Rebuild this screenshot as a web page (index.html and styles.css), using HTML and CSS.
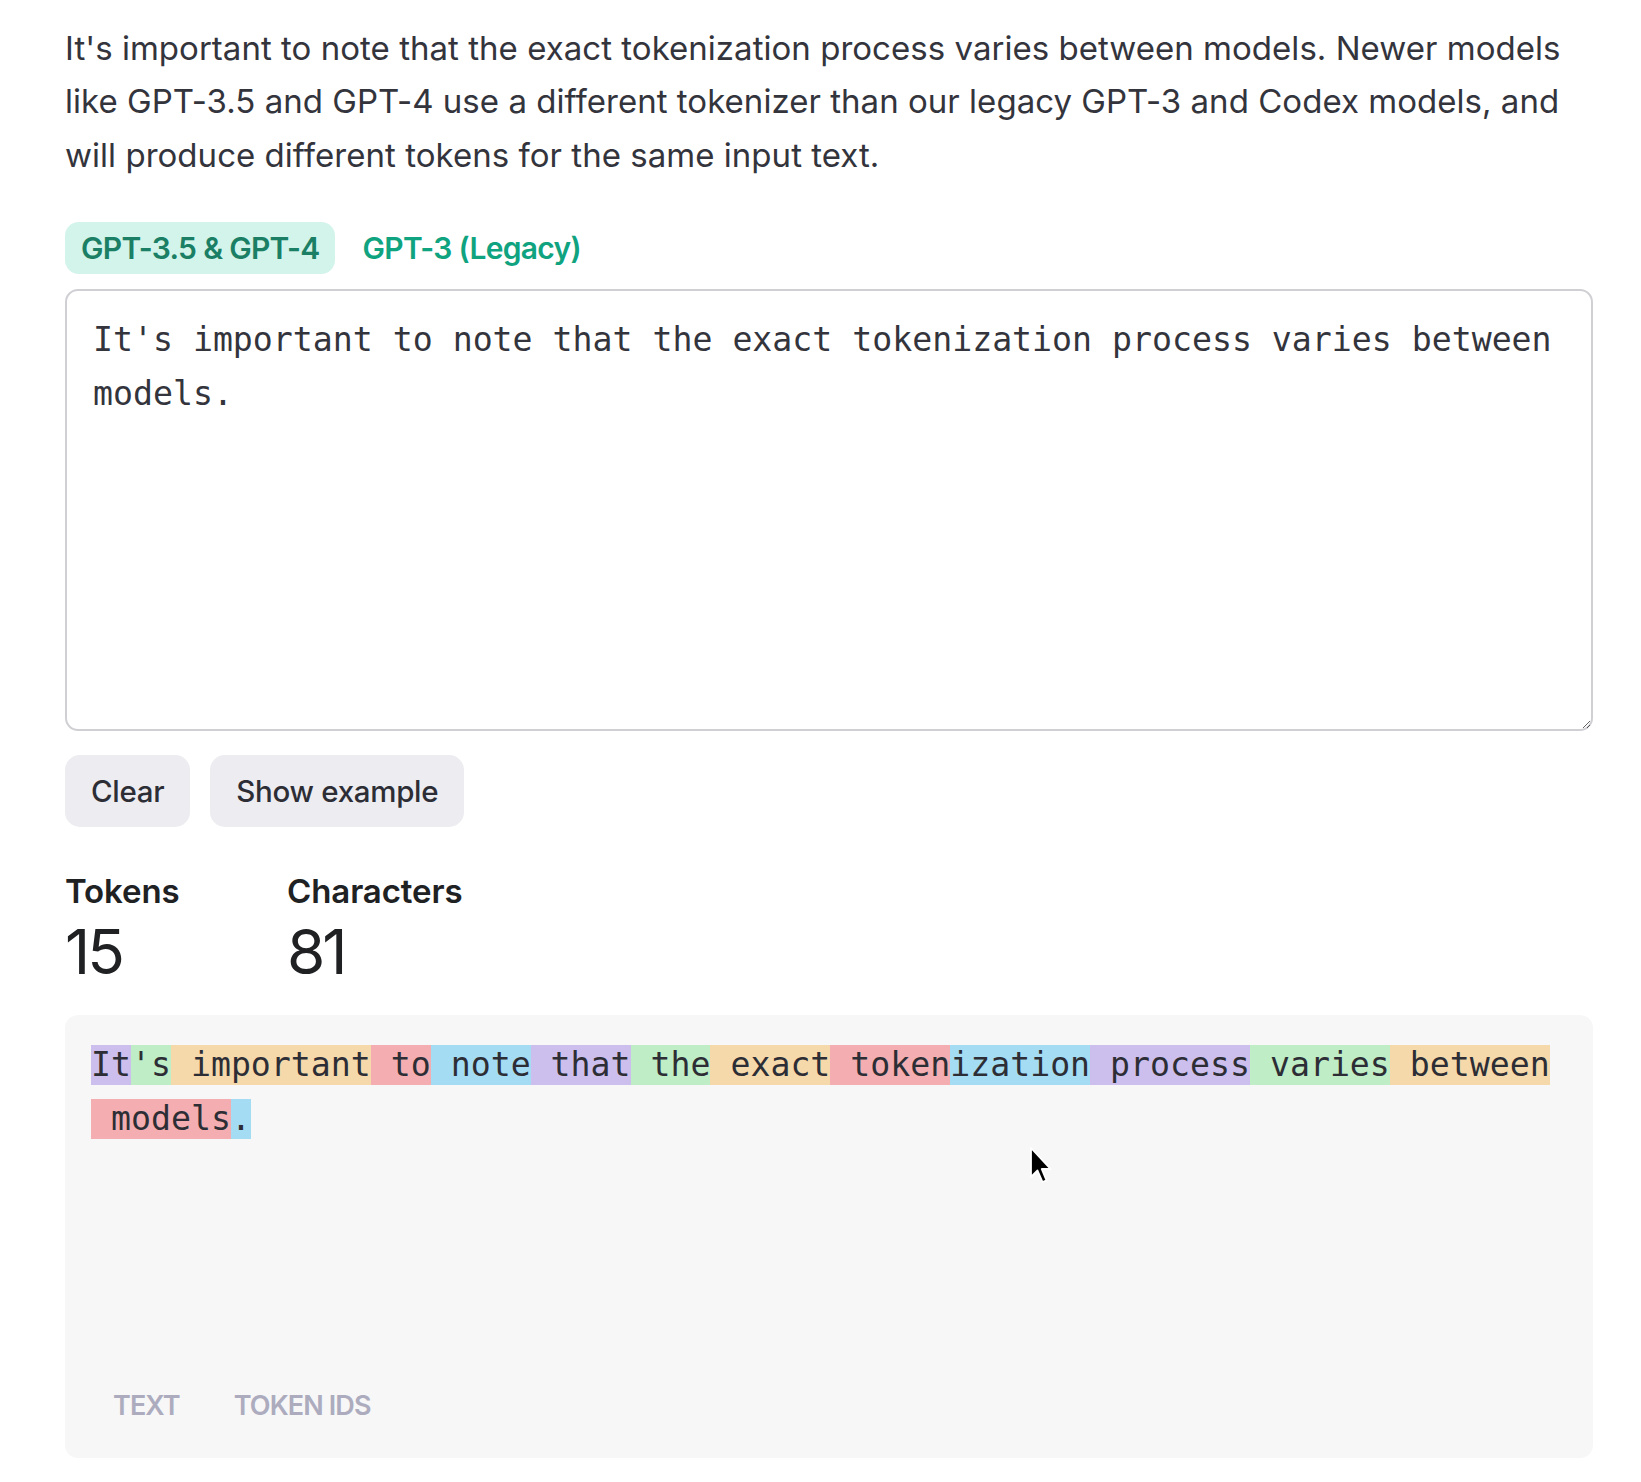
FILE: index.html
```html
<!DOCTYPE html>
<html lang="en">
<head>
<meta charset="utf-8">
<title>Tokenizer</title>
<link rel="stylesheet" href="styles.css">
</head>
<body>
<main class="page">
  <p class="intro">It's important to note that the exact tokenization process varies between models. Newer models like GPT-3.5 and GPT-4 use a different tokenizer than our legacy GPT-3 and Codex models, and will produce different tokens for the same input text.</p>

  <div class="tabs">
    <button class="tab tab-active">GPT-3.5 &amp; GPT-4</button>
    <button class="tab">GPT-3 (Legacy)</button>
  </div>

  <textarea class="input" spellcheck="false">It's important to note that the exact tokenization process varies between models.</textarea>

  <div class="actions">
    <button class="btn">Clear</button>
    <button class="btn">Show example</button>
  </div>

  <div class="stats">
    <div class="stat">
      <div class="stat-label">Tokens</div>
      <div class="stat-value">15</div>
    </div>
    <div class="stat">
      <div class="stat-label">Characters</div>
      <div class="stat-value">81</div>
    </div>
  </div>

  <section class="output">
    <div class="tokens"><span class="tok c-purple">It</span><span class="tok c-green">'s</span><span class="tok c-orange"> important</span><span class="tok c-red"> to</span><span class="tok c-blue"> note</span><span class="tok c-purple"> that</span><span class="tok c-green"> the</span><span class="tok c-orange"> exact</span><span class="tok c-red"> token</span><span class="tok c-blue">ization</span><span class="tok c-purple"> process</span><span class="tok c-green"> varies</span><span class="tok c-orange"> between</span><span class="tok c-red"> models</span><span class="tok c-blue">.</span></div>
    <div class="view-toggle">
      <button class="toggle">TEXT</button>
      <button class="toggle">TOKEN IDS</button>
    </div>
    <svg class="cursor" width="26" height="40" viewBox="0 0 26 40" aria-hidden="true">
      <path d="M2 2 L2 31 L8.5 24.5 L13.5 36 L17.5 34.3 L12.7 23 L21.5 23 Z" fill="#000" stroke="#fff" stroke-width="1.8" stroke-linejoin="round"/>
    </svg>
  </section>
</main>
</body>
</html>
```

FILE: styles.css
```css
* {
  box-sizing: border-box;
}

html, body {
  margin: 0;
  padding: 0;
  background: #ffffff;
}

body {
  font-family: Inter, "Liberation Sans", Arial, sans-serif;
  color: #353740;
}

.page {
  width: 1528px;
  margin-left: 65px;
  padding-top: 22px;
  display: flex;
  flex-direction: column;
  align-items: flex-start;
}

.intro {
  margin: 0;
  font-size: 33px;
  line-height: 53.4px;
  color: #33343c;
  letter-spacing: 0.03px;
}

.tabs {
  margin-top: 40px;
  display: flex;
  gap: 11px;
}

.tab {
  height: 52px;
  padding: 0 16px;
  border: none;
  border-radius: 14px;
  background: transparent;
  font-family: Inter, "Liberation Sans", Arial, sans-serif;
  font-size: 30px;
  font-weight: 600;
  letter-spacing: -0.7px;
  color: #10a37f;
  cursor: pointer;
}

.tab-active {
  background: #d2f4ea;
  color: #1a7f64;
}

.input {
  display: block;
  margin-top: 15px;
  width: 1528px;
  height: 442px;
  padding: 22px 20px 22px 26px;
  border: 2px solid #cfcfd4;
  border-radius: 13px;
  font-family: "DejaVu Sans Mono", "Liberation Mono", monospace;
  font-size: 33.2px;
  line-height: 53.5px;
  color: #33343c;
  background: #ffffff;
  outline: none;
  resize: vertical;
}

.actions {
  margin-top: 24px;
  display: flex;
  gap: 20px;
}

.btn {
  height: 72px;
  padding: 0 26px;
  border: none;
  border-radius: 15px;
  background: #ececf1;
  font-family: Inter, "Liberation Sans", Arial, sans-serif;
  font-size: 29.5px;
  font-weight: 500;
  letter-spacing: -0.3px;
  color: #2d2e35;
  cursor: pointer;
}

.stats {
  margin-top: 44px;
  display: grid;
  grid-template-columns: 222px auto;
}

.stat-label {
  font-size: 33px;
  line-height: 40px;
  font-weight: 600;
  letter-spacing: -0.1px;
  color: #202123;
}

.stat-value {
  margin-top: 4px;
  font-size: 62px;
  line-height: 74px;
  font-weight: 400;
  letter-spacing: -3px;
  color: #202123;
}

.output {
  position: relative;
  margin-top: 26px;
  width: 1528px;
  height: 443px;
  padding: 23px 18px 23px 26px;
  border-radius: 13px;
  background: #f7f7f8;
  display: flex;
  flex-direction: column;
}

.tokens {
  flex: 1;
  font-family: "DejaVu Sans Mono", "Liberation Mono", monospace;
  font-size: 33.2px;
  line-height: 54px;
  color: #2d2e35;
}

.tok {
  display: inline-block;
  white-space: pre;
  line-height: 40px;
}

.c-purple { background: rgba(107, 64, 216, 0.3); }
.c-green  { background: rgba(104, 222, 122, 0.4); }
.c-orange { background: rgba(244, 172, 54, 0.4); }
.c-red    { background: rgba(239, 65, 70, 0.4); }
.c-blue   { background: rgba(39, 181, 234, 0.4); }

.view-toggle {
  display: flex;
  gap: 54px;
  height: 60px;
  align-items: center;
  padding-left: 22px;
}

.toggle {
  padding: 0;
  border: none;
  background: transparent;
  font-family: Inter, "Liberation Sans", Arial, sans-serif;
  font-size: 27px;
  font-weight: 600;
  letter-spacing: -0.9px;
  color: #acacbe;
  cursor: pointer;
}

.cursor {
  position: absolute;
  left: 964px;
  top: 131px;
}
```
